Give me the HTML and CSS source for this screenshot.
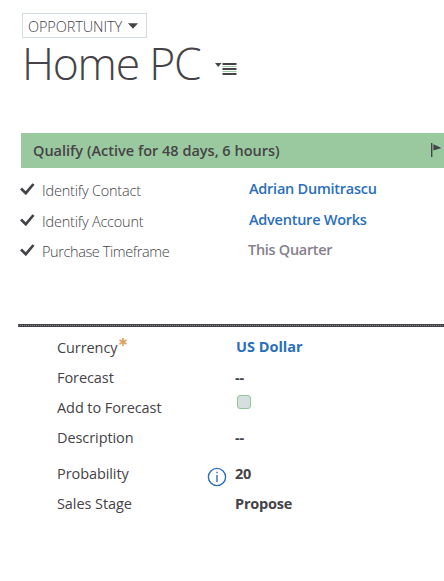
FILE: index.html
```html
<!DOCTYPE html>
<html lang="en">
<head>
<meta charset="utf-8">
<title>Home PC</title>
<link rel="stylesheet" href="styles.css">
</head>
<body>
<header class="header">
  <div class="entity"><span class="entity-name">OPPORTUNITY</span><svg class="caret" width="10" height="6" viewBox="0 0 10 6"><path d="M0 .3h10L5 5.8z"/></svg></div>
  <div class="title-row">
    <h1 class="title">Home PC</h1>
    <svg class="menu-icon" width="23" height="13" viewBox="0 0 23 13"><path d="M0 0h6.5L3.2 4z"/><path d="M7.5 1h14M7.5 6h14M7.5 11h14" stroke="#454348" stroke-width="2"/><path d="M7.5 3.5h14M7.5 8.5h14" stroke="#9dcba2"/></svg>
  </div>
</header>
<section class="process">
  <div class="stage"><span class="stage-name">Qualify (Active for 48 days, 6 hours)</span><svg class="flag" width="11" height="14" viewBox="0 0 11 14"><path d="M0 0h1.4v14H0zM2.4 1.2L10.5 5 2.4 7.5z"/></svg></div>
  <div class="step"><svg class="check" width="15" height="12" viewBox="0 0 15 12"><path d="M1 5.5l4.8 4.7L13.5 1"/></svg><span class="step-label">Identify Contact</span><a class="step-value">Adrian Dumitrascu</a></div>
  <div class="step step-mid"><svg class="check" width="15" height="12" viewBox="0 0 15 12"><path d="M1 5.5l4.8 4.7L13.5 1"/></svg><span class="step-label">Identify Account</span><a class="step-value">Adventure Works</a></div>
  <div class="step"><svg class="check" width="15" height="12" viewBox="0 0 15 12"><path d="M1 5.5l4.8 4.7L13.5 1"/></svg><span class="step-label tight">Purchase Timeframe</span><span class="step-value muted">This Quarter</span></div>
</section>
<div class="divider"></div>
<section class="details">
  <div class="field"><span class="label">Currency<svg class="required" width="8" height="8" viewBox="0 0 8 8"><path d="M4 0v8M.5 2l7 4M.5 6l7-4"/></svg></span><a class="value link">US Dollar</a></div>
  <div class="field"><span class="label">Forecast</span><span class="value">--</span></div>
  <div class="field"><span class="label">Add to Forecast</span><span class="value"><i class="checkbox"></i></span></div>
  <div class="field"><span class="label">Description</span><span class="value">--</span></div>
  <div class="field spaced"><span class="label">Probability</span><svg class="info" width="20" height="20" viewBox="0 0 20 20"><circle cx="10" cy="10" r="8.6"/><path d="M10 8v7M10 4.7v1.5"/></svg><span class="value">20</span></div>
  <div class="field"><span class="label">Sales Stage</span><span class="value">Propose</span></div>
</section>
</body>
</html>
```
FILE: styles.css
```css
* { box-sizing: border-box; }
body {
  margin: 0;
  width: 444px;
  height: 581px;
  overflow: hidden;
  background: #fff;
  color: #454348;
  font-family: "Open Sans", "Noto Sans", sans-serif;
  font-size: 14.5px;
  line-height: 30px;
  white-space: nowrap;
}
svg { display: block; flex: none; fill: #454348; }
.header { height: 133px; padding: 13px 0 0 22px; }
.entity {
  display: flex;
  align-items: center;
  width: 125px;
  height: 25px;
  padding-left: 5px;
  border: 1px solid #d3dedb;
  line-height: 20px;
}
.entity-name { width: 100px; padding-top: 2px; font-weight: 300; letter-spacing: -0.1px; }
.title-row { display: flex; height: 56px; }
.title {
  width: 193px;
  margin: 0;
  font-size: 44.5px;
  font-weight: 300;
  line-height: 50px;
  letter-spacing: -1.25px;
}
.menu-icon { margin-top: 25px; }
.process { height: 190px; padding-left: 21px; }
.stage {
  display: flex;
  align-items: center;
  justify-content: space-between;
  height: 35px;
  margin-bottom: 8px;
  padding: 0 2px 0 12px;
  background: #9bc99f;
}
.stage-name { font-weight: 600; }
.flag { margin-bottom: 2px; }
.step { display: flex; height: 31px; }
.step-mid { height: 30px; }
.check { margin: 7px 7px 0 -1px; fill: none; stroke: #454348; stroke-width: 2.7; }
.step-label { width: 207px; font-weight: 300; letter-spacing: -0.2px; }
.tight { letter-spacing: -0.4px; }
.step-value { margin-top: -2px; font-weight: 600; letter-spacing: -0.25px; color: #2a6fbb; }
.muted { margin-left: -1px; letter-spacing: -0.3px; color: #86818c; }
.divider {
  height: 3px;
  margin: 1px 0 0 18px;
  background: repeating-linear-gradient(90deg, #85818a 0 1px, #454348 1px 2px) 0 1px / 100% 1px no-repeat #454348;
}
.details { padding: 6px 0 0 57px; }
.field { display: flex; height: 30px; }
.label { display: flex; width: 178px; letter-spacing: -0.08px; }
.required { margin: 5px 0 0 2px; fill: none; stroke: #e0a064; stroke-width: 1.7; }
.value { font-weight: 700; letter-spacing: -0.2px; }
.link { margin: -1px 0 0 1px; letter-spacing: 0; color: #2a6fbb; }
.spaced { margin-top: 6px; }
.info { margin: 8px 8px 0 -28px; fill: none; stroke: #2a6fbb; stroke-width: 1.4; }
.checkbox {
  display: block;
  width: 14px;
  height: 14px;
  margin: 2px 0 0 2px;
  border: 1px solid #94c69b;
  border-radius: 3px;
  background: #d5dfdf;
}
```
